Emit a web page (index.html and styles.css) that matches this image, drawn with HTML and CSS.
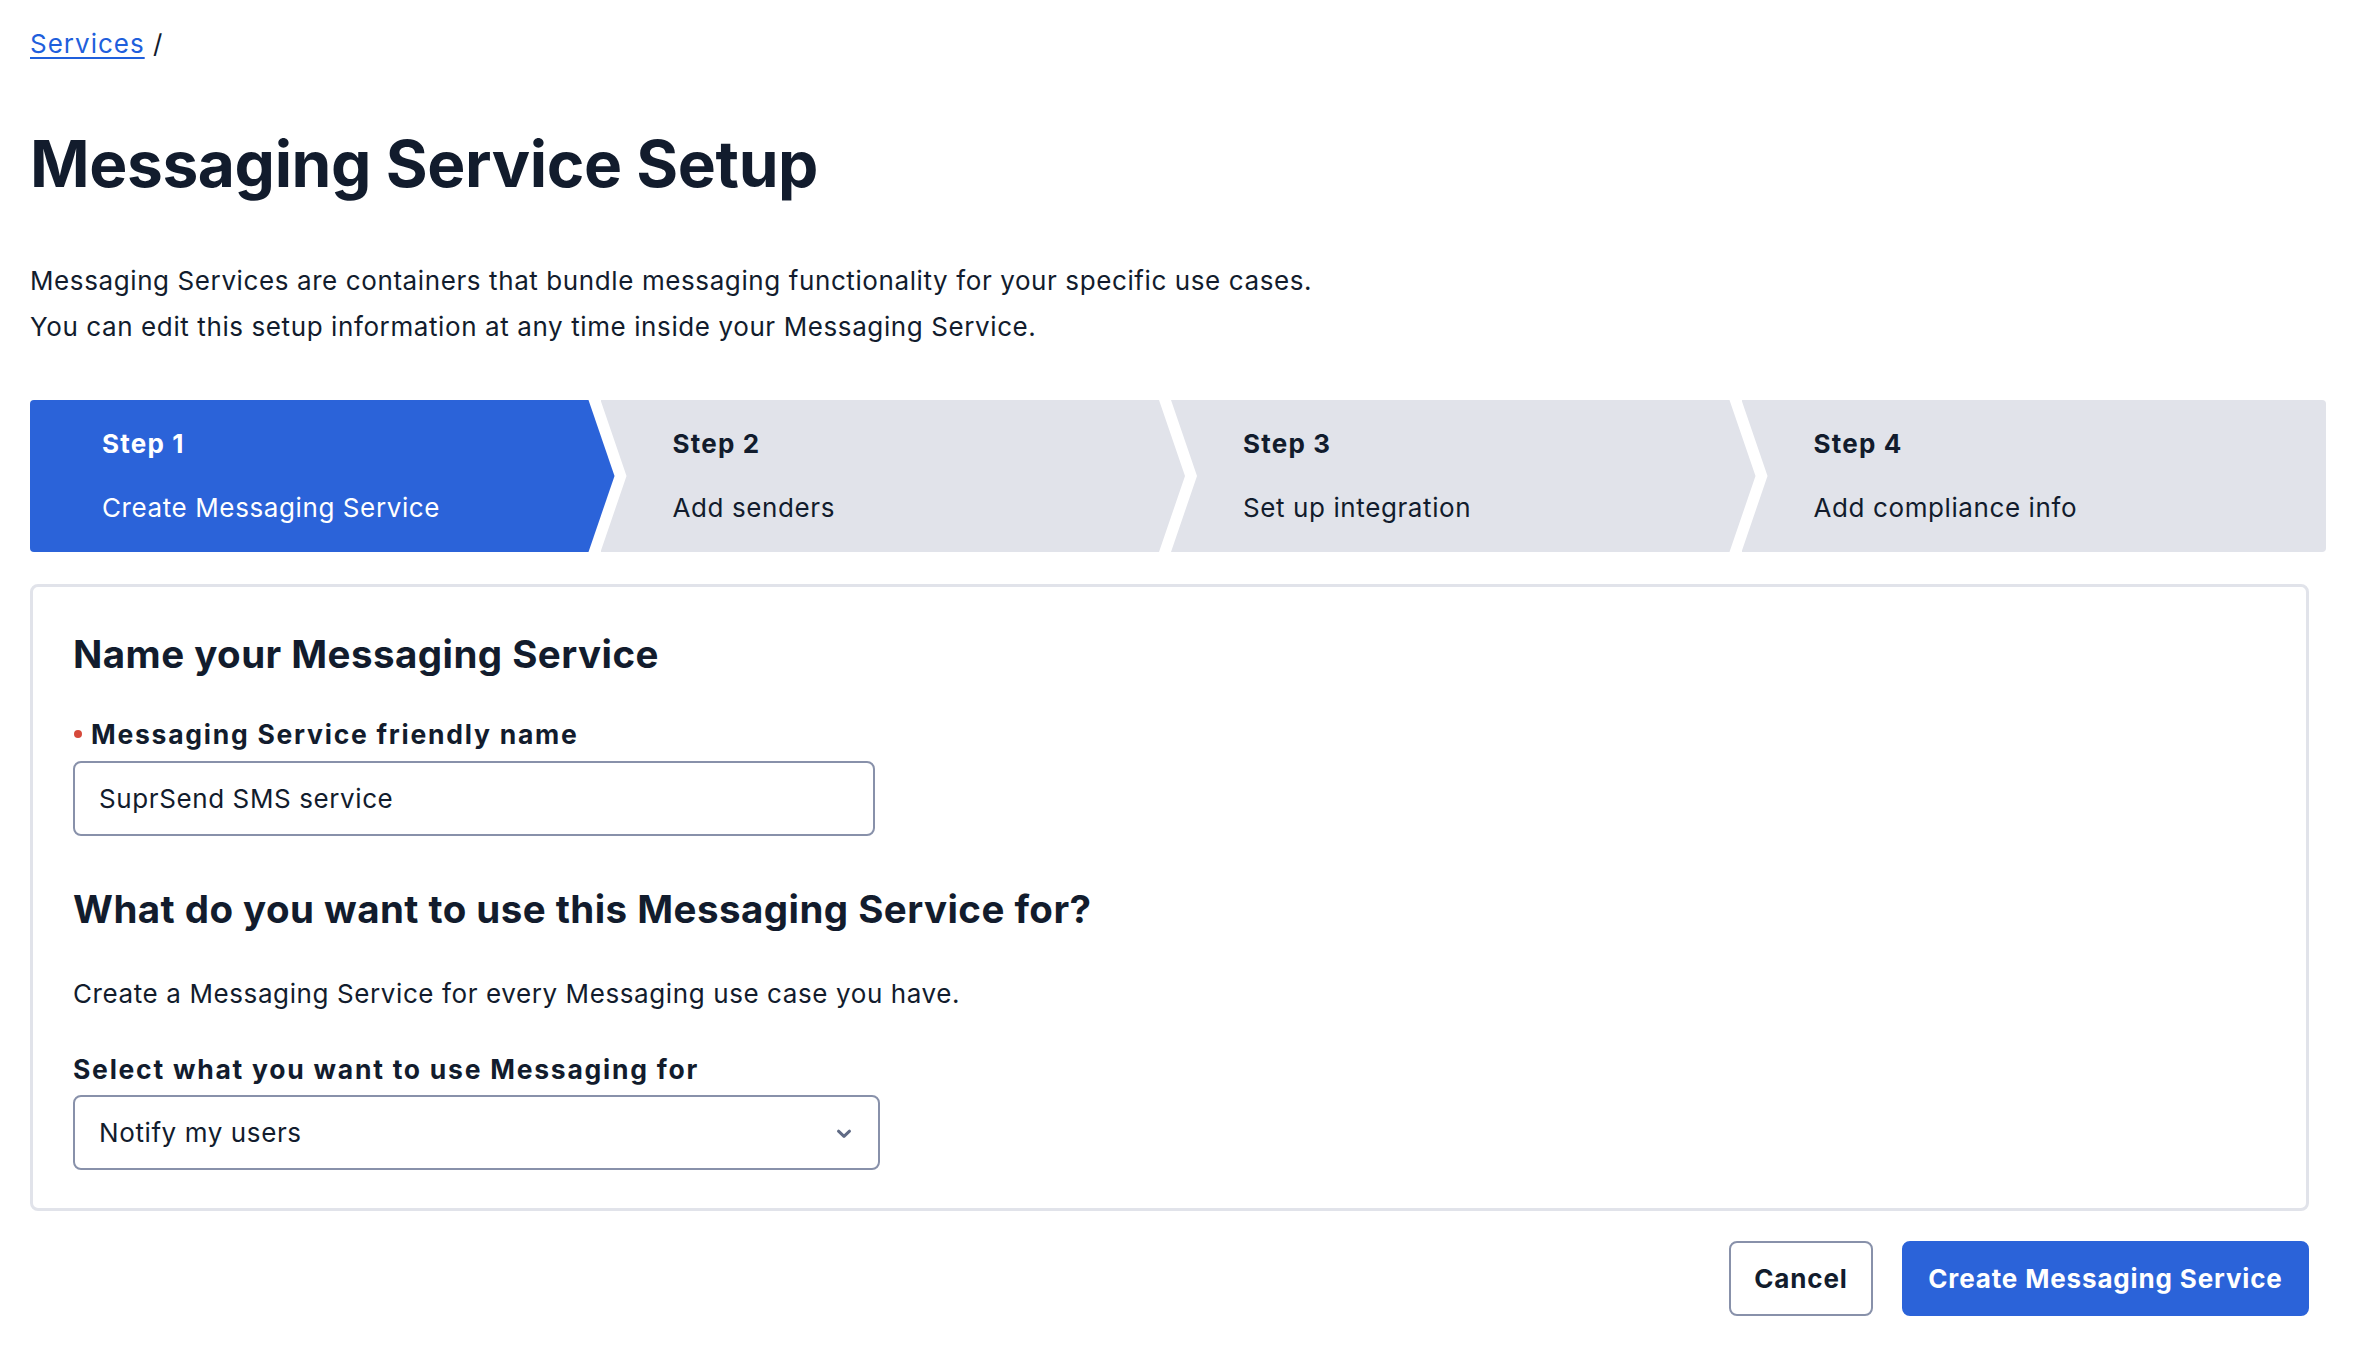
FILE: index.html
```html
<!DOCTYPE html>
<html lang="en">
<head>
<meta charset="utf-8">
<title>Messaging Service Setup</title>
<link rel="stylesheet" href="styles.css">
</head>
<body>
<div class="page">
  <nav class="breadcrumb"><a href="#" class="crumb-link">Services</a> <span class="crumb-sep">/</span></nav>
  <h1 class="page-title">Messaging Service Setup</h1>
  <div class="intro">
    <p class="intro-line">Messaging Services are containers that bundle messaging functionality for your specific use cases.</p>
    <p class="intro-line">You can edit this setup information at any time inside your Messaging Service.</p>
  </div>

  <div class="steps">
    <div class="step step-first step-active">
      <div class="step-num">Step 1</div>
      <div class="step-label">Create Messaging Service</div>
    </div>
    <div class="step step-mid">
      <div class="step-num">Step 2</div>
      <div class="step-label">Add senders</div>
    </div>
    <div class="step step-mid">
      <div class="step-num">Step 3</div>
      <div class="step-label">Set up integration</div>
    </div>
    <div class="step step-last">
      <div class="step-num">Step 4</div>
      <div class="step-label">Add compliance info</div>
    </div>
  </div>

  <div class="form-area">
    <section class="card">
      <h2 class="card-heading">Name your Messaging Service</h2>
      <label class="field-label field-label-first"><span class="req-dot"></span>Messaging Service friendly name</label>
      <div class="input-box">SuprSend SMS service</div>

      <h2 class="card-heading card-heading-second">What do you want to use this Messaging Service for?</h2>
      <p class="card-text">Create a Messaging Service for every Messaging use case you have.</p>
      <label class="field-label field-label-second">Select what you want to use Messaging for</label>
      <div class="select-box">
        <span class="select-value">Notify my users</span>
        <svg class="chevron" width="16" height="10" viewBox="0 0 16 10" aria-hidden="true"><path d="M2.5 2.2 L8 7.4 L13.5 2.2" fill="none" stroke="#606b85" stroke-width="3" stroke-linecap="round" stroke-linejoin="round"/></svg>
      </div>
    </section>

    <div class="actions">
      <button class="btn btn-secondary">Cancel</button>
      <button class="btn btn-primary">Create Messaging Service</button>
    </div>
  </div>
</div>
</body>
</html>
```

FILE: styles.css
```css
* { box-sizing: border-box; }

html, body {
  margin: 0;
  padding: 0;
  background: #ffffff;
}

body {
  font-family: Inter, "Noto Sans", "Liberation Sans", sans-serif;
  color: #121c2d;
  font-size: 26px;
}

.page {
  padding: 26px 34px 0 30px;
}

.breadcrumb {
  font-size: 26px;
  line-height: 36px;
  height: 36px;
  letter-spacing: 1px;
}

.crumb-link {
  color: #1f5fdc;
  text-decoration: underline;
  text-underline-offset: 4px;
  text-decoration-thickness: 2px;
}

.crumb-sep {
  color: #121c2d;
}

.page-title {
  margin: 62px 0 0 0;
  font-size: 64px;
  line-height: 80px;
  font-weight: 700;
  letter-spacing: -0.4px;
}

.intro {
  margin-top: 54px;
}

.intro-line {
  margin: 0;
  line-height: 46px;
  font-size: 26px;
  letter-spacing: 0.6px;
}

.steps {
  display: flex;
  margin-top: 50px;
  height: 152px;
}

.step {
  flex: 1 1 0;
  margin-left: -14px;
  background: #e1e3ea;
  padding: 26px 0 0 72px;
  color: #121c2d;
}

.step-first {
  margin-left: 0;
  border-radius: 4px 0 0 4px;
  clip-path: polygon(0 0, calc(100% - 26px) 0, 100% 50%, calc(100% - 26px) 100%, 0 100%);
}

.step-mid {
  clip-path: polygon(0 0, calc(100% - 26px) 0, 100% 50%, calc(100% - 26px) 100%, 0 100%, 26px 50%);
}

.step-last {
  border-radius: 0 4px 4px 0;
  clip-path: polygon(0 0, 100% 0, 100% 100%, 0 100%, 26px 50%);
}

.step-active {
  background: #2b63d9;
  color: #ffffff;
}

.step-num {
  font-weight: 700;
  font-size: 26px;
  line-height: 36px;
  letter-spacing: 1.2px;
}

.step-label {
  margin-top: 28px;
  font-size: 26px;
  line-height: 36px;
  letter-spacing: 0.6px;
}

.form-area {
  width: calc(100% - 17px);
  margin-top: 32px;
}

.card {
  border: 3px solid #e1e3ea;
  border-radius: 8px;
  padding: 43px 40px 38px 40px;
}

.card-heading {
  margin: 0;
  font-size: 38.5px;
  line-height: 48px;
  font-weight: 700;
  letter-spacing: 0.45px;
}

.card-heading-second {
  margin-top: 49px;
}

.field-label {
  display: flex;
  align-items: center;
  font-weight: 700;
  font-size: 26.5px;
  line-height: 36px;
  letter-spacing: 1.75px;
}

.field-label-first {
  margin-top: 38px;
}

.field-label-second {
  margin-top: 39px;
}

.req-dot {
  width: 8px;
  height: 8px;
  border-radius: 50%;
  background: #d6493b;
  margin: 0 9px 0 1px;
}

.input-box,
.select-box {
  margin-top: 9px;
  height: 75px;
  border: 2px solid #8891aa;
  border-radius: 8px;
  display: flex;
  align-items: center;
  padding: 0 26px 0 24px;
  font-size: 26px;
  letter-spacing: 0.6px;
  color: #121c2d;
}

.input-box {
  width: 802px;
}

.select-box {
  width: 807px;
  margin-top: 8px;
  justify-content: space-between;
}

.chevron {
  display: block;
  margin-top: 2px;
}

.card-text {
  margin: 43px 0 0 0;
  line-height: 36px;
  font-size: 26px;
  letter-spacing: 0.6px;
}

.actions {
  display: flex;
  justify-content: flex-end;
  gap: 29px;
  margin-top: 30px;
}

.btn {
  font-family: Inter, "Noto Sans", "Liberation Sans", sans-serif;
  font-weight: 700;
  font-size: 26px;
  letter-spacing: 0.85px;
  height: 75px;
  border-radius: 8px;
  padding: 0 20px;
  cursor: pointer;
}

.btn-secondary {
  background: #ffffff;
  border: 2px solid #8891aa;
  color: #121c2d;
  width: 144px;
}

.btn-primary {
  background: #2b63d9;
  border: 2px solid #2b63d9;
  color: #ffffff;
  width: 407px;
}
```
